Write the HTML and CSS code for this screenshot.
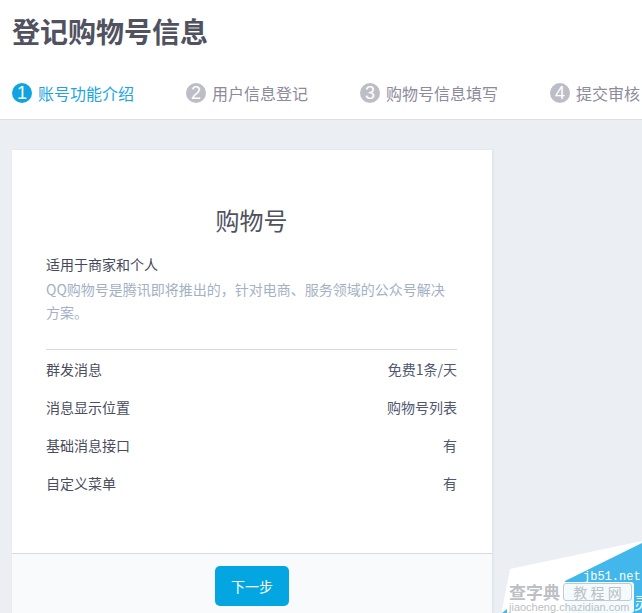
FILE: index.html
```html
<!DOCTYPE html>
<html lang="zh-CN">
<head>
<meta charset="utf-8">
<title>登记购物号信息</title>
<link rel="stylesheet" href="styles.css">
</head>
<body>
<header class="header">
  <h1 class="title">登记购物号信息</h1>
  <ol class="steps">
    <li class="step step-active"><span class="num">1</span><span>账号功能介绍</span></li>
    <li class="step"><span class="num">2</span><span>用户信息登记</span></li>
    <li class="step"><span class="num">3</span><span>购物号信息填写</span></li>
    <li class="step"><span class="num">4</span><span>提交审核</span></li>
  </ol>
</header>
<main class="main">
  <section class="card">
    <div class="card-body">
      <h2 class="card-title">购物号</h2>
      <p class="lead">适用于商家和个人</p>
      <p class="desc">QQ购物号是腾讯即将推出的，针对电商、服务领域的公众号解决方案。</p>
      <dl class="specs">
        <div class="spec"><dt>群发消息</dt><dd>免费1条/天</dd></div>
        <div class="spec"><dt>消息显示位置</dt><dd>购物号列表</dd></div>
        <div class="spec"><dt>基础消息接口</dt><dd>有</dd></div>
        <div class="spec"><dt>自定义菜单</dt><dd>有</dd></div>
      </dl>
    </div>
    <div class="card-foot"><button class="next" type="button">下一步</button></div>
  </section>
</main>
<div class="mark">
  <svg class="mark-bg" width="142" height="72" viewBox="0 0 142 72" aria-hidden="true">
    <polygon points="2,69 10,28 142,0 142,72 2,72" fill="#ffffff"/>
    <polygon points="65,40 142,2 142,72 65,72" fill="#41b7eb"/>
    <polygon points="2,72 7,68 7,72" fill="#41b7eb"/>
  </svg>
  <span class="mark-site">jb51.net</span>
  <span class="mark-char">灵</span>
  <div class="mark-strip">
    <div class="mark-row"><span class="mark-name">查字典</span><span class="mark-box">教 程 网</span></div>
    <div class="mark-url">jiaocheng.chazidian.com</div>
  </div>
</div>
</body>
</html>
```
FILE: styles.css
```css
* { box-sizing: border-box; }
html, body { height: 100%; }
body {
  margin: 0;
  height: 613px;
  overflow: hidden;
  position: relative;
  display: flex;
  flex-direction: column;
  background: #ebeef3;
  font-family: "Noto Sans CJK SC", "Liberation Sans", sans-serif;
  color: #4d4f5e;
}
.header {
  height: 120px;
  flex: none;
  background: #fff;
  border-bottom: 1px solid #dcdee3;
  padding: 11px 12px 0;
  overflow: hidden;
}
.title {
  margin: 0;
  height: 40px;
  font-size: 28px;
  line-height: 40px;
  font-weight: 700;
  color: #50525f;
}
.steps {
  list-style: none;
  margin: 31px 0 0;
  padding: 0;
  display: flex;
  gap: 52px;
  white-space: nowrap;
}
.step {
  display: flex;
  align-items: center;
  gap: 6px;
  height: 22px;
  font-size: 16px;
  line-height: 22px;
  color: #8d8a9c;
}
.num {
  width: 20px;
  height: 20px;
  border-radius: 50%;
  background: #bdbdc6;
  color: #fff;
  font-family: "Liberation Sans", sans-serif;
  font-size: 18px;
  line-height: 20px;
  text-align: center;
}
.step-active { color: #1ba6df; }
.step-active .num { background: #0fa4e0; }
.main {
  flex: 1;
  min-height: 0;
  padding: 30px 0 0 12px;
}
.card {
  width: 480px;
  height: 100%;
  background: #fff;
  display: flex;
  flex-direction: column;
  box-shadow: 1px 0 2px rgba(190, 195, 205, .35);
}
.card-body {
  height: 404px;
  flex: none;
  padding: 52px 35px 0 34px;
  border-bottom: 1px solid #d9dadc;
}
.card-title {
  margin: 0;
  font-size: 24px;
  line-height: 36px;
  font-weight: 400;
  text-align: center;
  color: #50525f;
}
.lead {
  margin: 14px 0 0;
  font-size: 14px;
  line-height: 24px;
  color: #45485a;
}
.desc {
  margin: 2px 0 0;
  font-size: 14px;
  line-height: 23px;
  color: #a3b1c4;
}
.specs {
  margin: 25px 0 0;
  padding-top: 0;
  border-top: 1px solid #d9dadc;
}
.spec {
  display: flex;
  justify-content: space-between;
  height: 38px;
  font-size: 14px;
  line-height: 38px;
  color: #4a4d5e;
}
.spec dd { margin: 0; color: #4f5870; }
.card-foot {
  flex: 1;
  background: #f8fafc;
  padding-top: 12px;
  display: flex;
  justify-content: center;
}
.next {
  width: 74px;
  height: 40px;
  border: 0;
  border-radius: 5px;
  background: #04a6e2;
  color: #fff;
  font-family: inherit;
  font-size: 14px;
  padding: 0;
}
.mark {
  position: absolute;
  right: 0;
  bottom: 0;
  width: 142px;
  height: 72px;
  overflow: hidden;
}
.mark-bg { display: block; position: absolute; left: 0; top: 0; }
.mark-site {
  position: absolute;
  left: 83px;
  top: 31px;
  font-family: "Liberation Mono", monospace;
  font-size: 12px;
  line-height: 11px;
  color: #fff;
}
.mark-char {
  position: absolute;
  left: 134px;
  top: 51px;
  font-size: 16px;
  line-height: 20px;
  color: #fff;
}
.mark-strip {
  position: absolute;
  left: 8px;
  top: 41px;
  width: 126px;
  height: 31px;
  background: rgba(255, 255, 255, .94);
  border-radius: 3px;
  padding-left: 1px;
  color: #bcc0c4;
}
.mark-row { display: flex; align-items: center; gap: 3px; height: 19px; }
.mark-name { font-size: 17px; line-height: 19px; font-weight: 700; white-space: nowrap; }
.mark-box {
  width: 69px;
  font-size: 14px;
  line-height: 16px;
  text-align: center;
  border: 1px solid #c5c8cc;
  border-radius: 3px;
  white-space: nowrap;
}
.mark-url {
  font-family: "Liberation Sans", sans-serif;
  font-size: 11px;
  line-height: 12px;
  white-space: nowrap;
}
```
